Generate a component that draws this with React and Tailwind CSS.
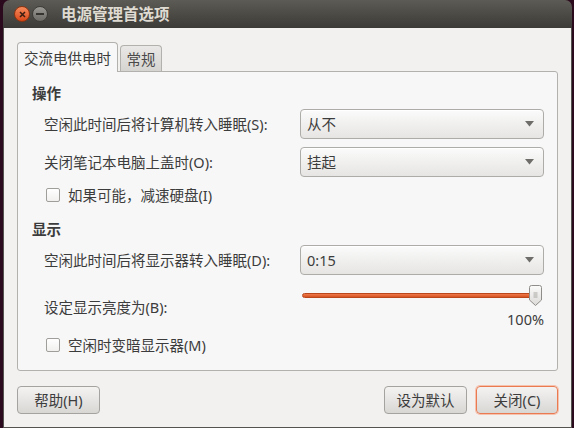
import React from "react";

const font = { fontFamily: '"Noto Sans", "Noto Sans CJK SC", sans-serif' };

function Combo({ value }) {
  return (
    <div className="w-[244px] h-[30px] shrink-0 rounded-[4px] border border-[#aeaca8] bg-gradient-to-b from-[#fbfbfb] to-[#e6e5e3] flex items-center pl-[6px] pr-[9px] shadow-[inset_0_1px_0_#ffffff]">
      <span className="flex-1 text-[14.5px] leading-[18px] text-[#3c3c3c]">{value}</span>
      <svg width="9" height="6" viewBox="0 0 9 6">
        <path d="M0 0 L9 0 L4.5 5.5 Z" fill="#6e6d6a" />
      </svg>
    </div>
  );
}

function Check({ label }) {
  return (
    <div className="h-[28px] flex items-center pl-[14px] gap-[8px]">
      <div className="w-[14px] h-[14px] rounded-[2px] border border-[#a09e9a] bg-gradient-to-b from-white to-[#f1f0ef]" />
      <span className="text-[14.5px] leading-[18px] text-[#3c3c3c]">{label}</span>
    </div>
  );
}

function Button({ children, def }) {
  return (
    <div
      className={
        "h-[28px] rounded-[4px] flex items-center justify-center text-[14.5px] leading-[18px] text-[#3c3c3c] bg-gradient-to-b from-[#f4f3f2] to-[#d9d7d4] " +
        (def
          ? "w-[82px] border border-[#e97a52] shadow-[0_0_0_1px_#f6c2ad]"
          : "w-[83px] border border-[#a5a39f]")
      }
    >
      {children}
    </div>
  );
}

export default function App() {
  return (
    <div className="w-[574px] h-[428px] bg-[#2b0a1e] flex pl-[3px] pr-[2px] overflow-hidden" style={font}>
      <div className="flex-1 flex flex-col rounded-t-[7px] overflow-hidden">
        {/* Title bar */}
        <div className="h-[28px] shrink-0 bg-gradient-to-b from-[#5d5b55] to-[#3c3b37] flex items-center pl-[11px]">
          <div className="w-[16px] h-[16px] rounded-full bg-gradient-to-b from-[#f68a5a] to-[#d84615] border border-[#8e3412] flex items-center justify-center">
            <svg width="7" height="7" viewBox="0 0 7 7">
              <path d="M1 1 L6 6 M6 1 L1 6" stroke="#3a1c10" strokeWidth="1.5" />
            </svg>
          </div>
          <div className="ml-[2px] w-[16px] h-[16px] rounded-full bg-gradient-to-b from-[#9b9993] to-[#6c6a65] border border-[#3e3d39] flex items-center justify-center">
            <div className="w-[8px] h-[2px] bg-[#35342f]" />
          </div>
          <span className="ml-[13px] text-[15.5px] leading-[20px] font-bold text-[#dfdbd2]">电源管理首选项</span>
        </div>

        {/* Body */}
        <div className="flex-1 bg-[#f2f1f0] flex flex-col px-[13px] pt-[14px] border-l border-r border-b border-[#55534f]">
          {/* Tabs */}
          <div className="flex items-end h-[29px] relative z-10">
            <div className="w-[101px] h-[30px] -mb-px rounded-t-[4px] border border-b-0 border-[#b3b1ad] bg-[#f7f7f7] flex items-center justify-center text-[14.5px] leading-[18px] text-[#3c3c3c]">
              交流电供电时
            </div>
            <div className="ml-[2px] w-[42px] h-[26px] rounded-t-[4px] border border-b-0 border-[#b3b1ad] bg-gradient-to-b from-[#e9e8e6] to-[#d6d4d1] flex items-center justify-center text-[14.5px] leading-[18px] text-[#4a4a4a]">
              常规
            </div>
          </div>

          {/* Panel */}
          <div className="h-[300px] rounded-b-[3px] rounded-tr-[3px] border border-[#b3b1ad] bg-[#f7f7f7] pt-[12px] pl-[14px] pr-[13px] flex flex-col">
            <div className="h-[18px] text-[14.5px] leading-[18px] font-bold text-[#3c3c3c]">操作</div>

            <div className="mt-[7px] h-[30px] flex items-center">
              <span className="flex-1 pl-[12px] text-[14.5px] leading-[18px] text-[#3c3c3c]">空闲此时间后将计算机转入睡眠(S):</span>
              <Combo value="从不" />
            </div>
            <div className="mt-[8px] h-[30px] flex items-center">
              <span className="flex-1 pl-[12px] text-[14.5px] leading-[18px] text-[#3c3c3c]">关闭笔记本电脑上盖时(O):</span>
              <Combo value="挂起" />
            </div>
            <div className="mt-[4px]">
              <Check label="如果可能，减速硬盘(I)" />
            </div>

            <div className="mt-[11px] h-[18px] text-[14.5px] leading-[18px] font-bold text-[#3c3c3c]">显示</div>

            <div className="mt-[7px] h-[30px] flex items-center">
              <span className="flex-1 pl-[12px] text-[14.5px] leading-[18px] text-[#3c3c3c]">空闲此时间后将显示器转入睡眠(D):</span>
              <Combo value="0:15" />
            </div>

            <div className="mt-[10px] flex items-center">
              <span className="flex-1 pl-[12px] text-[14.5px] leading-[18px] text-[#3c3c3c] pt-[2px]">设定显示亮度为(B):</span>
              <div className="w-[244px] shrink-0 flex flex-col">
                <div className="h-[20px] flex items-center pl-[2px] pr-[2px]">
                  <div className="flex-1 h-[5px] rounded-full bg-gradient-to-b from-[#f07a4a] to-[#d5521f] border border-[#b9471b]" />
                  <svg width="13" height="21" viewBox="0 0 13 21" className="-ml-[12px] shrink-0">
                    <defs>
                      <linearGradient id="tg" x1="0" y1="0" x2="0" y2="1">
                        <stop offset="0" stopColor="#fbfbfb" />
                        <stop offset="1" stopColor="#dcdad7" />
                      </linearGradient>
                    </defs>
                    <path d="M2.5 0.5 H10.5 Q12.5 0.5 12.5 2.5 V15 L6.5 20.5 L0.5 15 V2.5 Q0.5 0.5 2.5 0.5 Z" fill="url(#tg)" stroke="#8f8d89" />
                    <path d="M4.5 8 H8.5 M4.5 10 H8.5 M4.5 12 H8.5" stroke="#a9a7a3" strokeWidth="1" />
                  </svg>
                </div>
                <div className="mt-[6px] h-[16px] text-right text-[14.5px] leading-[16px] text-[#3c3c3c]">100%</div>
              </div>
            </div>

            <div className="mt-[4px]">
              <Check label="空闲时变暗显示器(M)" />
            </div>
          </div>

          {/* Buttons */}
          <div className="mt-[15px] flex items-center">
            <Button>帮助(H)</Button>
            <div className="flex-1" />
            <Button>设为默认</Button>
            <div className="w-[9px]" />
            <Button def>关闭(C)</Button>
          </div>
        </div>
      </div>
    </div>
  );
}
